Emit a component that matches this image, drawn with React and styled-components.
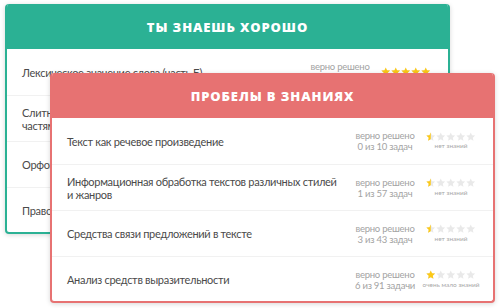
import React, { useId } from "react";
import styled, { createGlobalStyle } from "styled-components";

const GlobalStyle = createGlobalStyle`
  html, body {
    margin: 0;
    padding: 0;
    background: #ffffff;
  }
  body {
    font-family: Lato, "Open Sans", sans-serif;
  }
`;

const Stage = styled.div`
  position: relative;
  width: 500px;
  height: 308px;
  overflow: hidden;
  padding: 4px 0 0 5px;
  box-sizing: border-box;
`;

const Card = styled.div`
  width: 445px;
  height: 230px;
  box-sizing: border-box;
  background: #fff;
  border: 2px solid ${(p) => p.$color};
  border-top: none;
  border-radius: 4px;
  box-shadow: 0 1px 5px rgba(0, 0, 0, 0.16);
  overflow: hidden;
  display: flex;
  flex-direction: column;
`;

const FrontCard = styled(Card)`
  position: absolute;
  top: 73px;
  left: 50px;
`;

const Header = styled.div`
  height: 45px;
  margin: 0 -2px;
  flex-shrink: 0;
  display: flex;
  align-items: center;
  justify-content: center;
  background: ${(p) => p.$color};
  color: #fff;
  font-family: "Open Sans", sans-serif;
  font-weight: 800;
  font-size: 13px;
  letter-spacing: 0.9px;
  text-transform: uppercase;
`;

const Row = styled.div`
  height: 46px;
  flex-shrink: 0;
  box-sizing: border-box;
  display: grid;
  grid-template-columns: 1fr 66px 60px;
  column-gap: 3px;
  align-items: center;
  padding: 0 12px 0 15px;
  border-top: ${(p) => (p.$first ? "none" : "1px solid #f1f1f1")};
`;

const Title = styled.div`
  font-size: 11px;
  line-height: 13px;
  letter-spacing: -0.3px;
  color: #4a4a4a;
  padding-right: 8px;
`;

const Stats = styled.div`
  text-align: center;
  font-size: 9.5px;
  line-height: 11px;
  letter-spacing: -0.25px;
  color: #a3a3a3;
  white-space: nowrap;
`;

const Rating = styled.div`
  display: flex;
  flex-direction: column;
  align-items: center;
  gap: 1px;
`;

const Stars = styled.div`
  display: flex;
  gap: 0.5px;
`;

const Caption = styled.div`
  font-size: 6.5px;
  line-height: 8px;
  color: #a8a8a8;
  white-space: nowrap;
`;

const STAR =
  "5,0.4 6.35,3.4 9.6,3.75 7.15,5.95 7.85,9.2 5,7.55 2.15,9.2 2.85,5.95 0.4,3.75 3.65,3.4";

function Star({ fill }) {
  const id = useId();
  return (
    <svg width="9.5" height="9.5" viewBox="0 0 10 10">
      <defs>
        <clipPath id={id}>
          <rect x="0" y="0" width={10 * fill} height="10" />
        </clipPath>
      </defs>
      <polygon points={STAR} fill="#e9e9e9" />
      {fill > 0 && <polygon points={STAR} fill="#fcc917" clipPath={`url(#${id})`} />}
    </svg>
  );
}

function StarRow({ value }) {
  return (
    <Stars>
      {[0, 1, 2, 3, 4].map((i) => (
        <Star key={i} fill={Math.max(0, Math.min(1, value - i))} />
      ))}
    </Stars>
  );
}

const good = [
  "Лексическое значение слова (часть Б)",
  "Слитное и раздельное написание НЕ с различными частями речи",
  "Орфоэпические нормы",
  "Правописание суффиксов",
];

const gaps = [
  { title: "Текст как речевое произведение", done: "0 из 10 задач", value: 0.5, caption: "нет знаний" },
  { title: "Информационная обработка текстов различных стилей и жанров", done: "1 из 57 задач", value: 0.5, caption: "нет знаний" },
  { title: "Средства связи предложений в тексте", done: "3 из 43 задач", value: 0.5, caption: "нет знаний" },
  { title: "Анализ средств выразительности", done: "6 из 91 задачи", value: 1, caption: "очень мало знаний" },
];

export default function App() {
  return (
    <Stage>
      <GlobalStyle />
      <Card $color="#2bb194">
        <Header $color="#2bb194">Ты знаешь хорошо</Header>
        {good.map((t, i) => (
          <Row key={t} $first={i === 0}>
            <Title>{t}</Title>
            <Stats>
              верно решено
              <br />
              {10 + i * 7} из {11 + i * 7} задач
            </Stats>
            <Rating>
              <StarRow value={5} />
            </Rating>
          </Row>
        ))}
      </Card>
      <FrontCard $color="#e77272">
        <Header $color="#e77272">Пробелы в знаниях</Header>
        {gaps.map((g, i) => (
          <Row key={g.title} $first={i === 0}>
            <Title>{g.title}</Title>
            <Stats>
              верно решено
              <br />
              {g.done}
            </Stats>
            <Rating>
              <StarRow value={g.value} />
              <Caption>{g.caption}</Caption>
            </Rating>
          </Row>
        ))}
      </FrontCard>
    </Stage>
  );
}
